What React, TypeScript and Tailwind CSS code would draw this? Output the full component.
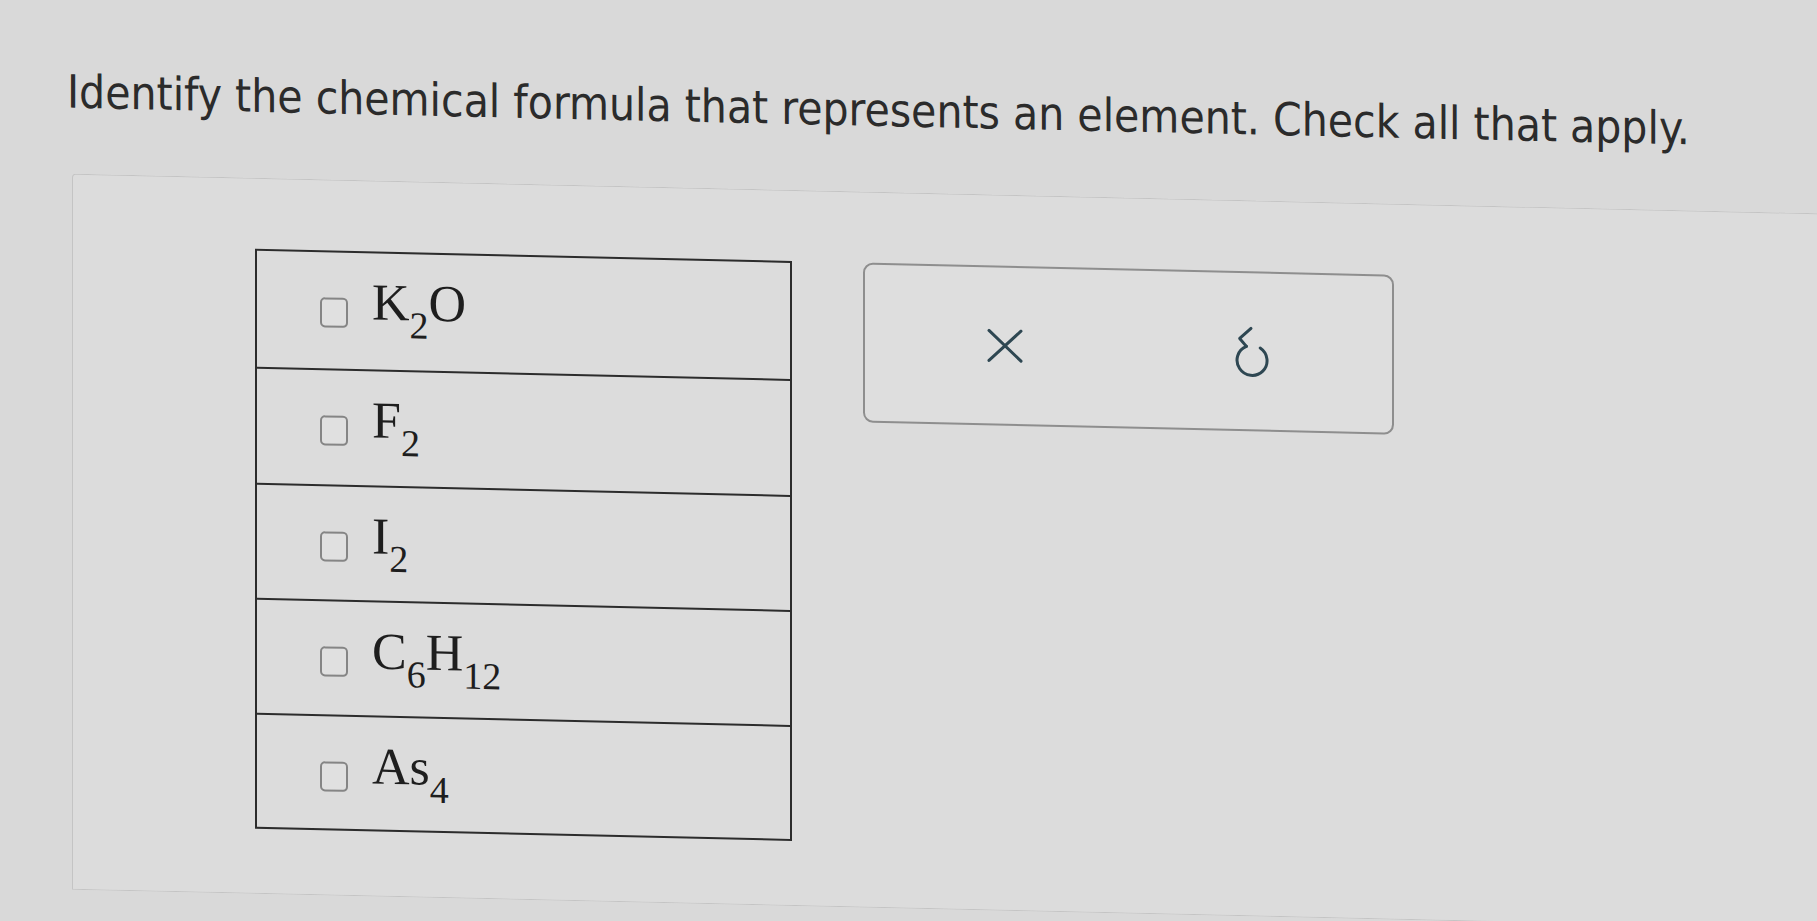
import React from "react";

type Formula = { id: string; h: string; parts: { t: string; sub?: boolean }[] };

// row heights follow the photo's slight perspective
const formulas: Formula[] = [
  { id: "k2o", h: "h-[118px]", parts: [{ t: "K" }, { t: "2", sub: true }, { t: "O" }] },
  { id: "f2", h: "h-[116px]", parts: [{ t: "F" }, { t: "2", sub: true }] },
  { id: "i2", h: "h-[115px]", parts: [{ t: "I" }, { t: "2", sub: true }] },
  { id: "c6h12", h: "h-[115px]", parts: [{ t: "C" }, { t: "6", sub: true }, { t: "H" }, { t: "12", sub: true }] },
  { id: "as4", h: "h-[110px]", parts: [{ t: "As" }, { t: "4", sub: true }] },
];

function ClearIcon() {
  return (
    <svg width="36" height="34" viewBox="0 0 36 34" fill="none" stroke="#2e4752" strokeWidth="3" strokeLinecap="round">
      <path d="M2 2 L34 32" />
      <path d="M34 2 L2 32" />
    </svg>
  );
}

function ResetIcon() {
  return (
    <svg width="36" height="53" viewBox="15 5 36 53" fill="none" stroke="#2e4752" strokeWidth="3" strokeLinecap="round" strokeLinejoin="round">
      <path d="M32 8 L20.7 18.3 L27.4 26.1" />
      <path d="M27.4 26.1 A15 15 0 1 0 41.2 27.4" />
    </svg>
  );
}

export default function App() {
  return (
    <div className="h-[921px] w-full overflow-hidden bg-[#d9d9d9]">
      <div className="origin-top-left skew-y-[1.3deg]">
        {/* question */}
        <h1 className="pl-[67px] pt-[68px] text-[45.7px] leading-[46px] text-[#2b2b2b] [font-family:'DejaVu_Sans_Condensed','DejaVu_Sans',sans-serif] font-stretch-condensed">
          Identify the chemical formula that represents an element. Check all that apply.
        </h1>

        {/* answer area */}
        <div className="ml-[72px] mt-[58px] flex h-[716px] gap-[71px] rounded-tl-[4px] border border-r-0 border-[#c4c4c4] bg-[#dcdcdc] pl-[182px] pt-[70px]">
          <div className="h-[580px] w-[537px] border-2 border-[#2c2c2c]">
            {formulas.map((f, i) => (
              <div
                key={f.id}
                className={`flex items-start gap-[24px] pl-[63px] ${f.h} ${i < formulas.length - 1 ? "border-b-2 border-[#2c2c2c]" : ""}`}
              >
                <span className="mt-[45px] h-[30px] w-[28px] shrink-0 rounded-[5px] border-2 border-[#858585] bg-[#e0e0e0]" />
                <span className="mt-[23px] text-[52px] leading-none text-[#1e1e1e] [font-family:'Liberation_Serif',serif]">
                  {f.parts.map((p, j) =>
                    p.sub ? (
                      <sub key={j} className="relative top-[18px] align-baseline text-[38px]">
                        {p.t}
                      </sub>
                    ) : (
                      <span key={j}>{p.t}</span>
                    )
                  )}
                </span>
              </div>
            ))}
          </div>

          <div className="grid h-[160px] w-[531px] grid-cols-2 items-center rounded-[10px] border-2 border-[#8e8e8e] bg-[#dedede] px-[16px]">
            <div className="flex justify-center">
              <ClearIcon />
            </div>
            <div className="flex justify-center">
              <ResetIcon />
            </div>
          </div>
        </div>
      </div>
    </div>
  );
}
